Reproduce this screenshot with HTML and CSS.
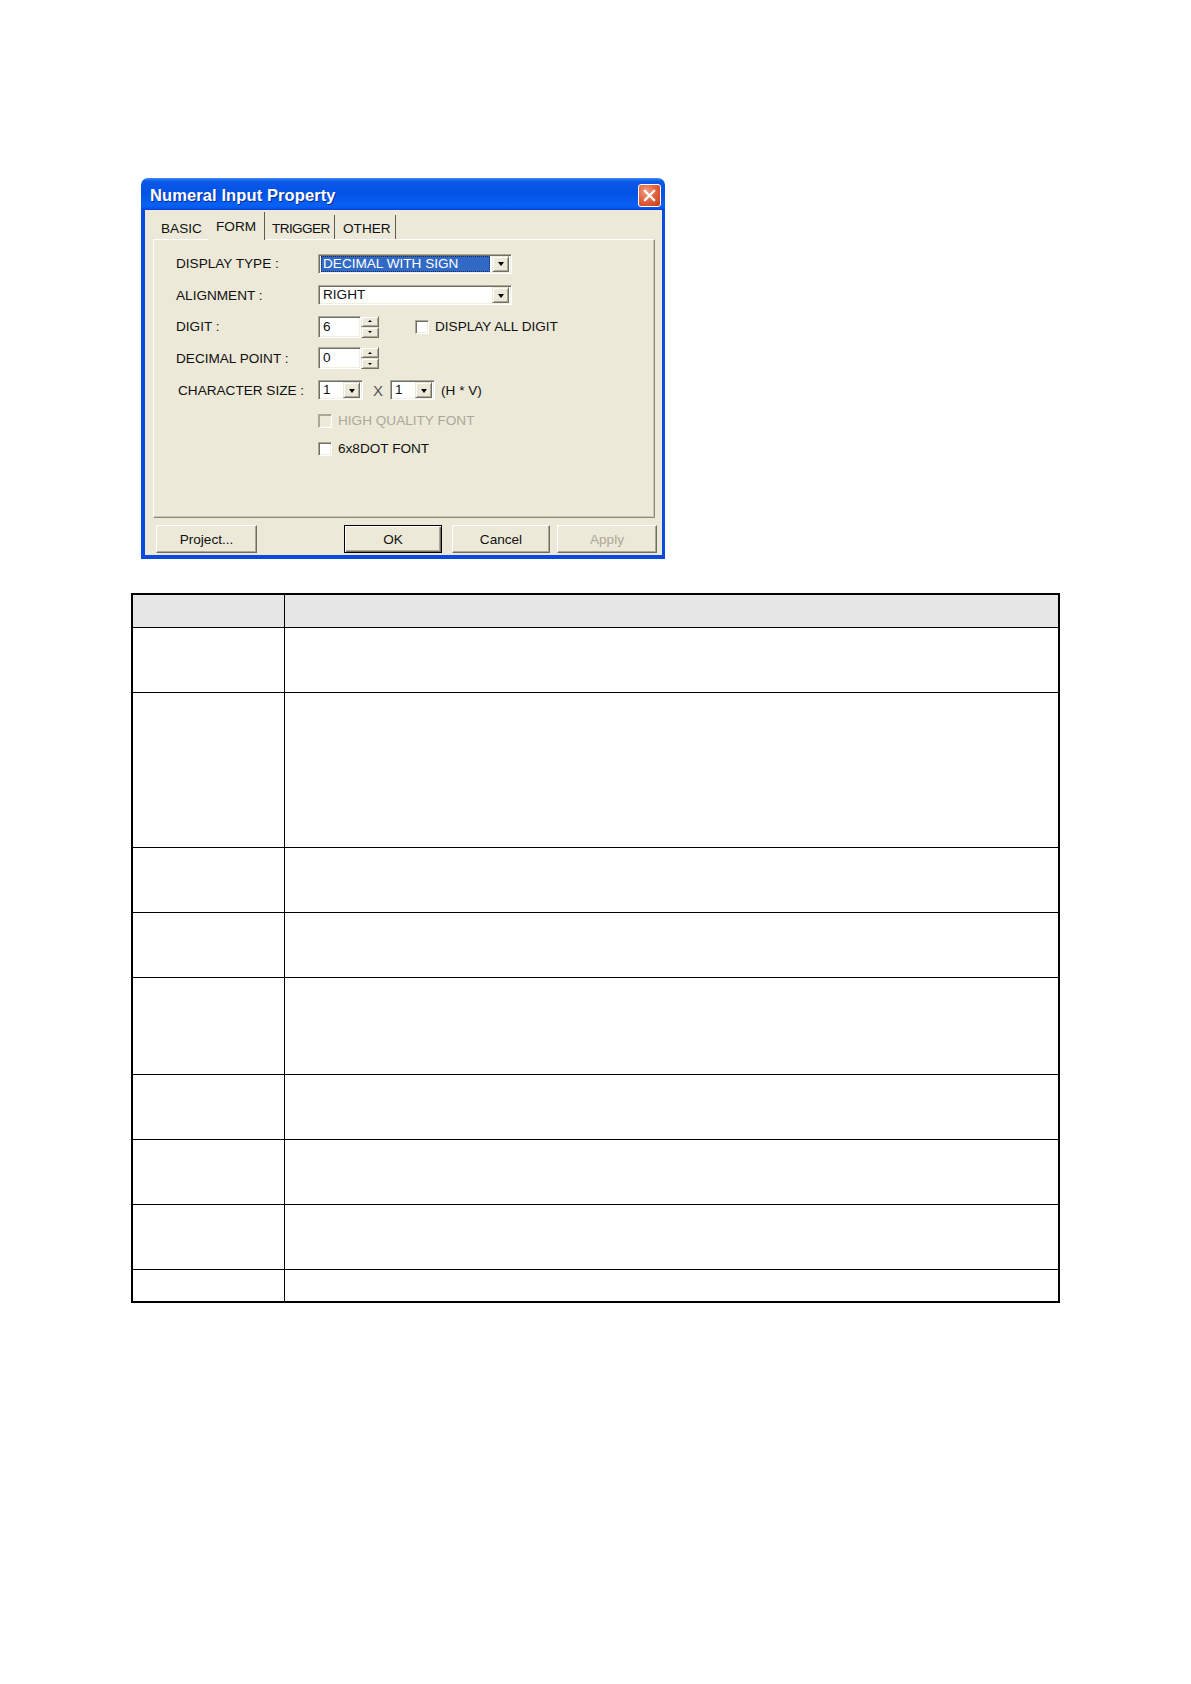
FILE: index.html
```html
<!DOCTYPE html>
<html>
<head>
<meta charset="utf-8">
<title>Numeral Input Property</title>
<link rel="stylesheet" href="styles.css">
</head>
<body>
<div class="page">
  <div class="dialog">
    <div class="titlebar">
      <span class="title">Numeral Input Property</span>
      <span class="close">
        <svg width="13" height="13" viewBox="0 0 13 13"><path d="M2 2 L11 11 M11 2 L2 11" stroke="#fff" stroke-width="2.4" stroke-linecap="square"/></svg>
      </span>
    </div>
    <div class="body">
      <div class="tabs">
        <div class="tab t-basic">BASIC</div>
        <div class="tab t-form sel">FORM</div>
        <div class="tab t-trig">TRIGGER</div>
        <div class="tab t-other">OTHER</div>
      </div>
      <div class="panel">
        <div class="row r1">
          <span class="label">DISPLAY TYPE :</span>
          <div class="field combo wide">
            <span class="ctext hl">DECIMAL WITH SIGN</span>
            <span class="dd"><i class="down"></i></span>
          </div>
        </div>
        <div class="row r2">
          <span class="label">ALIGNMENT :</span>
          <div class="field combo wide">
            <span class="ctext">RIGHT</span>
            <span class="dd"><i class="down"></i></span>
          </div>
        </div>
        <div class="row r3">
          <span class="label">DIGIT :</span>
          <div class="spin">
            <div class="field spinbox"><span class="ctext">6</span></div>
            <div class="spinbtns">
              <span class="sb"><i class="up"></i></span>
              <span class="sb"><i class="sdown"></i></span>
            </div>
          </div>
          <span class="cb all"></span>
          <span class="cbtext">DISPLAY ALL DIGIT</span>
        </div>
        <div class="row r4">
          <span class="label">DECIMAL POINT :</span>
          <div class="spin">
            <div class="field spinbox"><span class="ctext">0</span></div>
            <div class="spinbtns">
              <span class="sb"><i class="up"></i></span>
              <span class="sb"><i class="sdown"></i></span>
            </div>
          </div>
        </div>
        <div class="row r5">
          <span class="label ind">CHARACTER SIZE :</span>
          <div class="field combo small">
            <span class="ctext">1</span>
            <span class="dd"><i class="down"></i></span>
          </div>
          <span class="times">X</span>
          <div class="field combo small c2">
            <span class="ctext">1</span>
            <span class="dd"><i class="down"></i></span>
          </div>
          <span class="hv">(H * V)</span>
        </div>
        <div class="row r6">
          <span class="label"></span>
          <span class="cb disabled"></span>
          <span class="cbtext dis">HIGH QUALITY FONT</span>
        </div>
        <div class="row r7">
          <span class="label"></span>
          <span class="cb"></span>
          <span class="cbtext">6x8DOT FONT</span>
        </div>
      </div>
      <div class="buttons">
        <span class="btn b-project">Project...</span>
        <span class="btn b-ok def">OK</span>
        <span class="btn b-cancel">Cancel</span>
        <span class="btn b-apply dis">Apply</span>
      </div>
    </div>
  </div>

  <table class="grid">
    <tr class="hd"><td class="c1"></td><td></td></tr>
    <tr class="h65"><td class="c1"></td><td></td></tr>
    <tr class="h155"><td class="c1"></td><td></td></tr>
    <tr class="h65"><td class="c1"></td><td></td></tr>
    <tr class="h65"><td class="c1"></td><td></td></tr>
    <tr class="h97"><td class="c1"></td><td></td></tr>
    <tr class="h65"><td class="c1"></td><td></td></tr>
    <tr class="h65"><td class="c1"></td><td></td></tr>
    <tr class="h65"><td class="c1"></td><td></td></tr>
    <tr class="last"><td class="c1"></td><td></td></tr>
  </table>
</div>
</body>
</html>
```
FILE: styles.css
```css
body {
  margin: 0;
  background: #fff;
  font-family: "Liberation Sans", Arial, sans-serif;
}

.page {
  padding-top: 178px;
  padding-bottom: 40px;
}

/* ---------- dialog ---------- */
.dialog {
  margin-left: 141px;
  width: 524px;
  height: 381px;
  display: flex;
  flex-direction: column;
  font-size: 13.6px;
  color: #111;
}

.titlebar {
  height: 32px;
  box-sizing: border-box;
  display: flex;
  align-items: center;
  padding: 0 4px 0 9px;
  border-radius: 7px 7px 0 0;
  background: linear-gradient(to bottom,
    #3c8cf8 0%, #0a5ae8 10%, #0352e6 45%, #0761f2 85%, #0658ee 93%, #0440d6 100%);
}

.title {
  flex: 1;
  color: #fff;
  font-weight: bold;
  font-size: 16.5px;
  letter-spacing: 0.1px;
  text-shadow: 1px 1px 0 #0b2a9a;
  padding-top: 2px;
}

.close {
  width: 23px;
  height: 23px;
  margin-top: 3px;
  box-sizing: border-box;
  border: 1px solid #fff;
  border-radius: 3px;
  background: radial-gradient(circle at 35% 30%, #f0a088 0%, #e2643f 45%, #c83a1a 100%);
  display: flex;
  align-items: center;
  justify-content: center;
}

.body {
  flex: 1;
  display: flex;
  flex-direction: column;
  background: #ece9d8;
  border-style: solid;
  border-color: #0a4ae0;
  border-width: 0 3px 4px 4px;
}

/* tabs */
.tabs {
  display: flex;
  align-items: flex-start;
  margin: 2px 0 0 8px;
  height: 27px;
}

.tab {
  box-sizing: border-box;
  height: 24px;
  margin-top: 3px;
  padding: 4px 0 0 8px;
  line-height: 20px;
  border-right: 1px solid #5e5c52;
  white-space: nowrap;
}

.tab.sel {
  position: relative;
  z-index: 1;
  height: 28px;
  margin-top: 0;
  padding-top: 5px;
  background: #ece9d8;
}

.t-basic { width: 55px; border-right: 0; }
.t-form { width: 57px; }
.t-trig { width: 70px; padding-left: 7px; letter-spacing: -0.6px; }
.t-other { width: 61px; }

.panel {
  box-sizing: border-box;
  margin-left: 8px;
  width: 502px;
  height: 279px;
  padding: 8px 0 0 22px;
  border: 1px solid;
  border-color: #fff #8d8a7c #8d8a7c #fff;
  box-shadow: inset -1px -1px 0 #c9c6b6;
}

.row {
  display: flex;
  align-items: center;
  white-space: nowrap;
}

.r1 { height: 31px; }
.r2 { height: 32px; }
.r3 { height: 31px; }
.r4 { height: 32px; }
.r5 { height: 32px; }
.r6 { height: 29px; }
.r7 { height: 27px; }

.label {
  width: 142px;
  flex: none;
}

.label.ind {
  padding-left: 2px;
  width: 140px;
}

/* sunken field */
.field {
  box-sizing: border-box;
  border: 1px solid;
  border-color: #aca899 #fff #fff #aca899;
  box-shadow: inset 1px 1px 0 #716f64, inset -1px -1px 0 #f1efe2;
  background: #fff;
  display: flex;
  align-items: center;
  padding: 2px;
}

.combo {
  height: 20px;
}

.combo.wide { width: 194px; }
.combo.small { width: 45px; }

.ctext {
  flex: 1;
  height: 16px;
  line-height: 16px;
  padding-left: 2px;
  overflow: hidden;
}

.ctext.hl {
  background: #316ac5;
  color: #fff;
  margin-right: 2px;
  box-sizing: border-box;
  outline: 1px dotted #1a2a60;
  outline-offset: -1px;
}

.dd {
  flex: none;
  width: 17px;
  height: 16px;
  box-sizing: border-box;
  background: #ece9d8;
  border: 1px solid;
  border-color: #ece9d8 #716f64 #716f64 #ece9d8;
  box-shadow: inset 1px 1px 0 #fff, inset -1px -1px 0 #aca899;
  display: flex;
  align-items: center;
  justify-content: center;
}

.down {
  width: 0;
  height: 0;
  border-left: 3.5px solid transparent;
  border-right: 3.5px solid transparent;
  border-top: 4px solid #000;
  margin-top: 1px;
}

/* spin */
.spin {
  display: flex;
}

.spinbox {
  width: 43px;
  height: 22px;
}

.spinbtns {
  display: flex;
  flex-direction: column;
  width: 18px;
  height: 22px;
}

.sb {
  flex: 1;
  box-sizing: border-box;
  background: #ece9d8;
  border: 1px solid;
  border-color: #ece9d8 #716f64 #716f64 #ece9d8;
  box-shadow: inset 1px 1px 0 #fff, inset -1px -1px 0 #aca899;
  display: flex;
  align-items: center;
  justify-content: center;
}

.up {
  width: 0;
  height: 0;
  border-left: 2px solid transparent;
  border-right: 2px solid transparent;
  border-bottom: 2px solid #000;
}

.sdown {
  width: 0;
  height: 0;
  border-left: 2px solid transparent;
  border-right: 2px solid transparent;
  border-top: 2px solid #000;
}

/* checkboxes */
.cb {
  flex: none;
  width: 14px;
  height: 14px;
  box-sizing: border-box;
  border: 1px solid;
  border-color: #aca899 #fff #fff #aca899;
  box-shadow: inset 1px 1px 0 #716f64, inset -1px -1px 0 #f1efe2;
  background: #fff;
}

.cb.all { margin-left: 36px; }

.cb.disabled {
  background: #ece9d8;
  box-shadow: inset 1px 1px 0 #aca899, inset -1px -1px 0 #f1efe2;
}

.cbtext {
  margin-left: 6px;
}

.cbtext.dis { color: #aca899; }

.times {
  margin-left: 10px;
  color: #555;
  font-size: 15px;
}

.c2 { margin-left: 7px; }

.hv { margin-left: 6px; }

/* buttons */
.buttons {
  display: flex;
  margin-top: 7px;
  padding-left: 11px;
  height: 28px;
}

.btn {
  box-sizing: border-box;
  height: 28px;
  display: flex;
  align-items: center;
  justify-content: center;
  background: #ece9d8;
  border: 1px solid;
  border-color: #fff #716f64 #716f64 #fff;
  box-shadow: inset -1px -1px 0 #aca899;
}

.btn.def {
  border: 1px solid #000;
  box-shadow: inset 1px 1px 0 #fff, inset -1px -1px 0 #716f64, inset -2px -2px 0 #aca899;
}

.btn.dis { color: #aca899; }

.b-project { width: 101px; }
.b-ok { width: 98px; margin-left: 87px; }
.b-cancel { width: 98px; margin-left: 10px; }
.b-apply { width: 100px; margin-left: 7px; }

/* ---------- table ---------- */
.grid {
  margin-left: 131px;
  margin-top: 34px;
  width: 929px;
  border: 2px solid #000;
  border-collapse: separate;
  border-spacing: 0;
}

.grid td {
  padding: 0;
  border-bottom: 1px solid #000;
}

.grid td.c1 {
  width: 151px;
  border-right: 1px solid #000;
}

.grid tr.last td { border-bottom: 0; height: 31px; }

.grid tr.hd td { background: #e6e6e6; height: 32px; }
.grid tr.h65 td { height: 64px; }
.grid tr.h155 td { height: 154px; }
.grid tr.h97 td { height: 96px; }
```
